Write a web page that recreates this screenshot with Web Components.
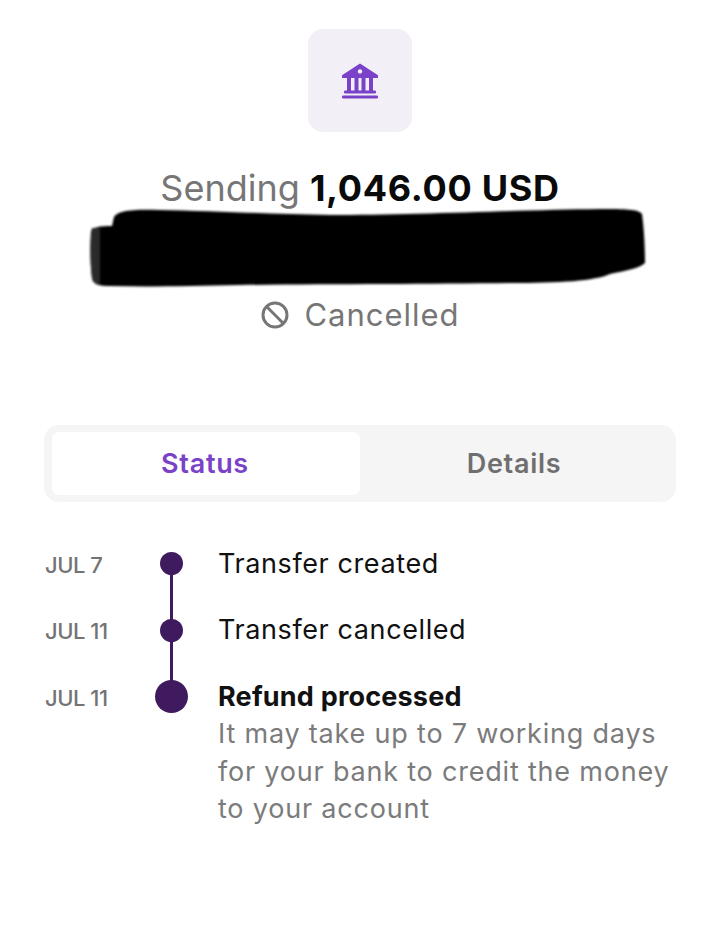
<!DOCTYPE html>
<html>
<head>
<meta charset="utf-8">
<title>Transfer</title>
<style>
  html, body { margin: 0; background: #fff; }
  body { font-family: Inter, "Liberation Sans", sans-serif; width: 720px; height: 925px; overflow: hidden; }
</style>
</head>
<body>
<transfer-screen></transfer-screen>
<script>
customElements.define('bank-badge', class BankBadge extends HTMLElement {
  connectedCallback() {
    const root = this.attachShadow({mode: 'open'})
    root.innerHTML = `
    <style>
      :host { display: flex; align-items: center; justify-content: center; width: 104px; height: 103px; background: #f2eff7; border-radius: 15px; }
      svg { display: block; }
    </style>
    <svg width="40" height="40" viewBox="0 0 40 40" fill="#7a42c8">
      <path d="M20 2.5 L38 14.2 V17 H2 V14.2 Z"/>
      <circle cx="20" cy="10.4" r="2.2" fill="#f2eff7"/>
      <rect x="7" y="16" width="4" height="14"/>
      <rect x="14.5" y="16" width="4" height="14"/>
      <rect x="21.5" y="16" width="4" height="14"/>
      <rect x="29" y="16" width="4" height="14"/>
      <rect x="4" y="29.5" width="32" height="3" rx="1.2"/>
      <rect x="2" y="34.5" width="36" height="3" rx="1.2"/>
    </svg>`
  }
})

customElements.define('redact-mark', class RedactMark extends HTMLElement {
  connectedCallback() {
    const root = this.attachShadow({mode: 'open'})
    root.innerHTML = `
    <style>
      :host { display: block; width: 556px; height: 80px; }
      svg { display: block; filter: blur(1px); }
    </style>
    <svg width="556" height="80" viewBox="0 0 556 80">
      <path fill="#000" d="M24 9 C28 3 40 1 70 2 C120 3 180 6 240 7 C320 7 430 2 510 1 C535 1 548 1 552 6 C554 20 555 40 555 55 C550 60 535 63 520 66 C505 73 470 75 420 75 C340 76 240 76 150 77 C100 78 60 79 20 78 C10 78 3 77 2 70 C0 55 0 35 1 24 C1 19 10 18 22 18 Z"/>
      <path fill="#2a2a2a" d="M2 20 H10 V76 C5 76 3 74 2 70 C0 55 0 35 2 20 Z"/>
    </svg>`
  }
})

customElements.define('tab-switch', class TabSwitch extends HTMLElement {
  connectedCallback() {
    const root = this.attachShadow({mode: 'open'})
    root.innerHTML = `
    <style>
      :host { display: grid; grid-template-columns: 308px 308px; box-sizing: border-box; width: 632px; height: 77px; padding: 7px 8px; background: #f5f5f6; border-radius: 15px; font-size: 27px; font-weight: 600; letter-spacing: .7px; color: #6f6f70; }
      div { display: flex; align-items: center; justify-content: center; border-radius: 7px; }
      .on { background: #fff; color: #7a42c8; padding-right: 2px; }
    </style>
    <div class="on">Status</div>
    <div>Details</div>`
  }
})

customElements.define('time-row', class TimeRow extends HTMLElement {
  connectedCallback() {
    const big = this.hasAttribute('big')
    const root = this.attachShadow({mode: 'open'})
    root.innerHTML = `
    <style>
      :host { display: grid; grid-template-columns: 105px 44px 1fr; align-items: start; min-height: 66.5px; }
      .date { font-size: 22px; line-height: 36px; color: #737374; font-weight: 500; letter-spacing: -.5px; padding-top: 2px; margin-left: 1px; margin-right: -1px; }
      .mark { position: relative; height: 38px; display: flex; align-items: center; justify-content: center; }
      .dot { width: ${big ? 33 : 23}px; height: ${big ? 33 : 23}px; border-radius: 50%; background: #3f1a5e; position: relative; z-index: 1; }
      .line { position: absolute; left: 20.5px; width: 3px; top: 19px; height: 66px; background: #3f1a5e; }
      .text { margin-left: 25px; font-size: 27px; line-height: 37.5px; color: #111; letter-spacing: .6px; white-space: nowrap; }
    </style>
    <div class="date">${this.getAttribute('date')}</div>
    <div class="mark">${this.hasAttribute('line') ? '<div class="line"></div>' : ''}<div class="dot"></div></div>
    <div class="text"><slot></slot></div>`
  }
})

customElements.define('transfer-screen', class TransferScreen extends HTMLElement {
  connectedCallback() {
    const root = this.attachShadow({mode: 'open'})
    root.innerHTML = `
    <style>
      :host { display: flex; flex-direction: column; align-items: center; width: 720px; height: 925px; padding-top: 29px; box-sizing: border-box; }
      h1 { margin: 34px 0 0; font-size: 36px; line-height: 44px; font-weight: 400; color: #767677; white-space: nowrap; height: 42px; letter-spacing: 0; }
      h1 b { color: #0a0a0a; font-weight: 700; letter-spacing: .7px; }
      redact-mark { margin: 0 0 0 15px; }
      .status { display: flex; align-items: center; gap: 14px; margin-top: 7px; font-size: 31px; line-height: 40px; color: #767677; height: 40px; letter-spacing: 1px; }
      .status svg { display: block; }
      tab-switch { margin-top: 90px; }
      .timeline { align-self: flex-start; margin: 42.5px 0 0 44px; width: 640px; }
      b.t { font-weight: 700; color: #111; letter-spacing: .2px; }
      .sub { color: #7b7b7c; letter-spacing: .8px; }
    </style>
    <bank-badge></bank-badge>
    <h1>Sending <b>1,046.00 USD</b></h1>
    <redact-mark></redact-mark>
    <div class="status">
      <svg width="30" height="30" viewBox="0 0 30 30" fill="none" stroke="#767677" stroke-width="3"><circle cx="15" cy="15" r="12"/><path d="M6.8 6.8 L23.2 23.2"/></svg>
      <span>Cancelled</span>
    </div>
    <tab-switch></tab-switch>
    <div class="timeline">
      <time-row date="JUL 7" line>Transfer created</time-row>
      <time-row date="JUL 11" line>Transfer cancelled</time-row>
      <time-row date="JUL 11" big><b class="t">Refund processed</b><div class="sub">It may take up to 7 working days<br>for your bank to credit the money<br>to your account</div></time-row>
    </div>`
  }
})
</script>
</body>
</html>
